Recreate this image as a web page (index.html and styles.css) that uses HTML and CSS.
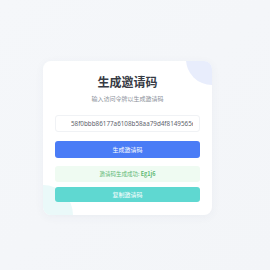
FILE: index.html
```html
<!DOCTYPE html>
<html lang="zh-CN">
<head>
  <meta charset="UTF-8" />
  <meta name="viewport" content="width=device-width, initial-scale=1.0"/>
  <title>生成邀请码</title>
  <link rel="stylesheet" href="styles.css">
</head>
<body>

  <div class="card">
    <div class="blob blob-top"></div>
    <div class="blob blob-bottom"></div>

    <h1 class="title">生成邀请码</h1>
    <p class="subtitle">输入访问令牌以生成邀请码</p>

    <input class="token" type="text" value="58f0bbb86177a6108b58aa79d4f8149565e2c1a0" />

    <button class="btn btn-generate">生成邀请码</button>

    <div class="result">邀请码生成成功: <span class="code">Eg1j6</span></div>

    <button class="btn btn-copy">复制邀请码</button>
  </div>

</body>
</html>
```

FILE: styles.css
```css
* {
  margin: 0;
  padding: 0;
  box-sizing: border-box;
  font-family: 'Noto Sans CJK SC', 'Noto Sans', sans-serif;
}

body {
  width: 270px;
  height: 270px;
  padding: 61px 0 0 43px;
  background: linear-gradient(135deg, #f5f7fa 0%, #f3f5f8 100%);
}

.card {
  position: relative;
  overflow: hidden;
  width: 169px;
  padding: 13px 12px 13px;
  background: #fff;
  border-radius: 8px;
  box-shadow: 0 2px 10px rgba(60, 80, 120, 0.05);
  text-align: center;
}

.blob {
  position: absolute;
  border-radius: 50%;
}

.blob-top {
  width: 52px;
  height: 52px;
  top: -28px;
  right: -26px;
  background: #e8edfc;
}

.blob-bottom {
  width: 60px;
  height: 60px;
  bottom: -30px;
  left: -30px;
  background: #eaf9f9;
}

.title {
  position: relative;
  font-size: 12px;
  line-height: 16px;
  font-weight: 700;
  color: #373b44;
}

.subtitle {
  position: relative;
  margin-top: 4px;
  font-size: 6px;
  line-height: 9px;
  color: #8a8f99;
}

.token {
  position: relative;
  display: block;
  width: 100%;
  height: 17px;
  margin-top: 12px;
  padding: 0 6px 0 15px;
  border: 1px solid #f0f2f5;
  border-radius: 3px;
  background: #fff;
  font-family: 'Noto Sans', sans-serif;
  font-size: 6.3px;
  color: #5f646e;
  outline: none;
}

.btn {
  position: relative;
  display: block;
  width: 100%;
  border: none;
  border-radius: 3px;
  color: #fff;
  font-size: 6px;
  cursor: pointer;
}

.btn-generate {
  height: 17px;
  margin-top: 9px;
  background: #4a7cf6;
}

.result {
  position: relative;
  height: 16px;
  margin-top: 8px;
  border-radius: 3px;
  background: #effbf2;
  color: #5cb873;
  font-size: 5.5px;
  line-height: 16px;
}

.result .code {
  font-weight: 700;
}

.btn-copy {
  height: 15px;
  margin-top: 5px;
  background: #5fd8d1;
}
```
